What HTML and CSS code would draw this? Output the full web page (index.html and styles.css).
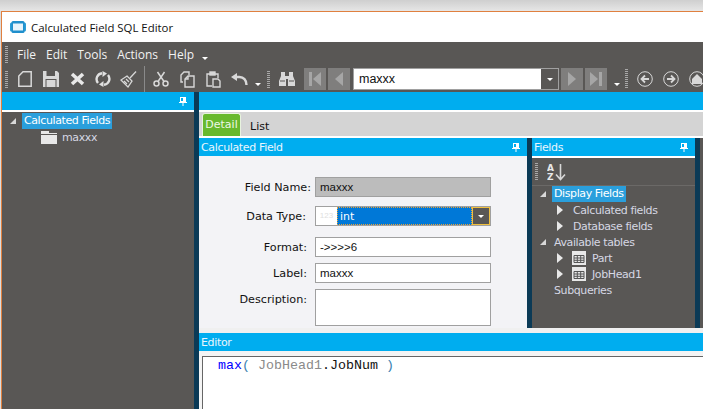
FILE: index.html
```html
<!DOCTYPE html>
<html lang="en">
<head>
<meta charset="utf-8">
<title>Calculated Field SQL Editor</title>
<link rel="stylesheet" href="styles.css">
</head>
<body>
<div class="desktop-strip"></div>
<div class="window">
  <header class="titlebar">
    <svg class="app-icon" width="16" height="12" viewBox="0 0 16 12"><rect x="0" y="1.500" width="16" height="9" rx="1.500" fill="#2a9fd8"/><rect x="1.500" y="0" width="13" height="12" rx="1.500" fill="#1f8fcc"/><rect x="3" y="2.500" width="10" height="7" fill="#e6f4fb"/></svg>
    <span>Calculated Field SQL Editor</span>
  </header>

  <nav class="menubar">
    <i class="grip"></i>
    <span class="menu-item">File</span><span class="menu-item">Edit</span><span class="menu-item">Tools</span><span class="menu-item">Actions</span><span class="menu-item">Help</span>
    <i class="chev menu-chev"></i>
  </nav>

  <div class="toolbar">
    <i class="grip"></i>
    <div class="tool"><svg width="14" height="16" viewBox="0 0 14 16" fill="none" stroke="#d8d8d8" stroke-width="1.500"><path d="M5 .8h8.200v14.400H.8V5z"/></svg></div>
    <div class="tool"><svg width="16" height="16" viewBox="0 0 16 16"><path d="M0 0h14l2 2v14H0z" fill="#d8d8d8"/><rect x="3.500" y="0" width="8.500" height="5" fill="#595755"/><rect x="2.500" y="8" width="11" height="8" fill="#595755"/><rect x="3.500" y="9" width="9" height="7" fill="#d8d8d8"/></svg></div>
    <div class="tool"><svg width="15" height="14" viewBox="0 0 15 14"><path d="M2 2l11 10M13 2L2 12" stroke="#e8e8e8" stroke-width="3.600"/></svg></div>
    <div class="tool"><svg width="16" height="16" viewBox="0 0 16 16" fill="none" stroke="#e0e0e0" stroke-width="2.400"><path d="M3 12A6 6 0 0 1 7 2.200"/><path d="M13 4a6 6 0 0 1-4 9.800"/><path d="M7.500 0v6L12 2.500z" fill="#e0e0e0" stroke="none"/><path d="M8.500 16v-6L4 13.500z" fill="#e0e0e0" stroke="none"/></svg></div>
    <div class="tool"><svg width="18" height="18" viewBox="0 0 18 18" fill="none" stroke="#d8d8d8" stroke-width="1.300"><path d="M10 8l6-6.500"/><path d="M7 6l5 5-4 6-7-7z"/><path d="M4 11l3 3M6 9l3 3"/></svg></div>
    <i class="sep"></i>
    <div class="tool"><svg width="16" height="16" viewBox="0 0 16 16" fill="none" stroke="#d8d8d8" stroke-width="1.500"><circle cx="3.500" cy="12.500" r="2.500"/><circle cx="12.500" cy="12.500" r="2.500"/><path d="M5 10.500L11.500 1M11 10.500L4.500 1"/></svg></div>
    <div class="tool"><svg width="15" height="17" viewBox="0 0 15 17" fill="none" stroke="#d8d8d8" stroke-width="1.400"><path d="M3 11H1V4l3-3h5v3"/><path d="M8 5h6v11H5V8z"/><path d="M8 5v3H5"/></svg></div>
    <div class="tool"><svg width="15" height="17" viewBox="0 0 15 17" fill="none" stroke="#d8d8d8" stroke-width="1.400"><path d="M6 15H1V3h11v4"/><rect x="4" y="1" width="5" height="3" fill="#d8d8d8"/><path d="M7 8h5l2 2v6H7z" fill="#595755"/></svg></div>
    <div class="tool"><svg width="17" height="12" viewBox="0 0 17 12" fill="none" stroke="#d8d8d8"><path d="M15.500 12c0-5-3-8-7-8H5" stroke-width="2.400"/><path d="M6 0v8L0 4z" fill="#d8d8d8" stroke="none"/></svg></div>
    <i class="chev tool-chev"></i>
    <i class="grip grip-mid"></i>
    <div class="tool tool-bino"><svg width="16" height="14" viewBox="0 0 16 14"><path d="M2 0h4v4h4V0h4v4l2 5v5H9V7H7v7H0V9l2-5z" fill="#d8d8d8"/><path d="M1 9h5M10 9h5" stroke="#595755"/></svg></div>
    <div class="nav-btn"><svg width="14" height="14" viewBox="0 0 14 14" fill="#a6a6a6"><rect x="1" y="0" width="3" height="14"/><path d="M13 0v14L5 7z"/></svg></div>
    <div class="nav-btn"><svg width="10" height="14" viewBox="0 0 10 14" fill="#a6a6a6"><path d="M9 0v14L1 7z"/></svg></div>
    <div class="combo"><span class="combo-text">maxxx</span><span class="combo-arrow"><i class="chev"></i></span></div>
    <div class="nav-btn"><svg width="10" height="14" viewBox="0 0 10 14" fill="#a6a6a6"><path d="M1 0v14l8-7z"/></svg></div>
    <div class="nav-btn"><svg width="14" height="14" viewBox="0 0 14 14" fill="#a6a6a6"><rect x="10" y="0" width="3" height="14"/><path d="M1 0v14l8-7z"/></svg></div>
    <i class="chev tool-chev chev-end"></i>
    <i class="grip grip-end"></i>
    <div class="circle-btn"><svg width="16" height="16" viewBox="0 0 16 16" fill="none" stroke="#d8d8d8"><circle cx="8" cy="8" r="7.300"/><path d="M12 8H4.500M8 4.500L4.500 8 8 11.500" stroke-width="1.800"/></svg></div>
    <div class="circle-btn"><svg width="16" height="16" viewBox="0 0 16 16" fill="none" stroke="#d8d8d8"><circle cx="8" cy="8" r="7.300"/><path d="M4 8h7.500M8 4.500L11.500 8 8 11.500" stroke-width="1.800"/></svg></div>
    <div class="circle-btn"><svg width="16" height="16" viewBox="0 0 16 16" fill="none" stroke="#d8d8d8"><circle cx="8" cy="8" r="7.300"/><path d="M8 3l5 5v5H3V8z" fill="#d8d8d8" stroke="none"/></svg></div>
  </div>

  <div class="workspace">
    <aside class="left-pane">
      <div class="blue-bar left-bar"><svg class="pin" width="8" height="9" viewBox="0 0 8 9"><path d="M1 0h6v5H1zM0 5h8v1H0zM3.500 6h1v3h-1z" fill="#fff"/><rect x="2" y="1" width="2" height="3" fill="#00adef"/></svg></div>
      <div class="dark-tree left-tree">
        <div class="tree-row"><i class="open-arrow"></i><span class="selected">Calculated Fields</span></div>
        <div class="tree-row leaf"><svg width="16" height="13" viewBox="0 0 16 13"><path d="M0 0h8v2h8v11H0z" fill="#e8e8e8"/><rect x="0" y="3" width="16" height="1" fill="#595755"/></svg><span>maxxx</span></div>
      </div>
    </aside>
    <i class="splitter"></i>
    <main class="right-pane">
      <div class="blue-bar right-bar"></div>
      <div class="tabstrip">
        <span class="tab active">Detail</span>
        <span class="tab">List</span>
      </div>
      <div class="panels">
        <section class="calc-panel">
          <div class="panel-head"><span>Calculated Field</span><svg class="pin" width="8" height="9" viewBox="0 0 8 9"><path d="M1 0h6v5H1zM0 5h8v1H0zM3.500 6h1v3h-1z" fill="#fff"/><rect x="2" y="1" width="2" height="3" fill="#00adef"/></svg></div>
          <div class="form">
            <div class="row row-name"><label class="lbl lbl-wide">Field Name:</label><div class="field readonly">maxxx</div></div>
            <div class="row row-type"><label class="lbl lbl-type">Data Type:</label>
              <div class="field type-field"><span class="type-icon">123</span><span class="type-value">int</span><span class="type-arrow"><i class="chev"></i></span></div>
            </div>
            <div class="row row-format"><label class="lbl">Format:</label><div class="field">-&gt;&gt;&gt;&gt;6</div></div>
            <div class="row row-tight"><label class="lbl">Label:</label><div class="field">maxxx</div></div>
            <div class="row row-tight"><label class="lbl">Description:</label><div class="field area"></div></div>
          </div>
        </section>
        <i class="splitter"></i>
        <section class="fields-panel">
          <div class="panel-head"><span>Fields</span><svg class="pin" width="8" height="9" viewBox="0 0 8 9"><path d="M1 0h6v5H1zM0 5h8v1H0zM3.500 6h1v3h-1z" fill="#fff"/><rect x="2" y="1" width="2" height="3" fill="#00adef"/></svg></div>
          <div class="fields-body">
            <div class="fields-tools"><i class="grip"></i>
              <svg class="sort" width="19" height="18" viewBox="0 0 19 18"><text x="0" y="8" class="sort-letter">A</text><text x="0" y="17" class="sort-letter">Z</text><path d="M13.500 1v15M9 11.500l4.500 5 4.500-5" fill="none" stroke="#d8d8d8" stroke-width="1.600"/></svg>
            </div>
            <div class="dark-tree fields-tree">
              <div class="tree-row"><i class="open-arrow"></i><span class="selected">Display Fields</span></div>
              <div class="tree-row lvl2"><i class="closed-arrow"></i><span>Calculated fields</span></div>
              <div class="tree-row lvl2"><i class="closed-arrow"></i><span>Database fields</span></div>
              <div class="tree-row"><i class="open-arrow"></i><span class="plain">Available tables</span></div>
              <div class="tree-row lvl2"><i class="closed-arrow"></i><svg class="grid-icon" width="14" height="14" viewBox="0 0 14 14"><rect width="14" height="14" fill="#e8e8e8"/><path d="M2 4.500h10v7H2zM2 7h10M2 9.300h10M5.300 4.500v7M8.700 4.500v7" fill="#e8e8e8" stroke="#555"/></svg><span>Part</span></div>
              <div class="tree-row lvl2"><i class="closed-arrow"></i><svg class="grid-icon" width="14" height="14" viewBox="0 0 14 14"><rect width="14" height="14" fill="#e8e8e8"/><path d="M2 4.500h10v7H2zM2 7h10M2 9.300h10M5.300 4.500v7M8.700 4.500v7" fill="#e8e8e8" stroke="#555"/></svg><span>JobHead1</span></div>
              <div class="tree-row"><i class="no-arrow"></i><span class="plain">Subqueries</span></div>
            </div>
          </div>
        </section>
        <i class="splitter"></i>
        <div class="overflow-panel"></div>
      </div>
      <div class="band"></div>
      <section class="editor">
        <div class="panel-head"><span>Editor</span></div>
        <div class="editor-body">
          <pre class="code"><span class="kw">max</span><span class="paren">(</span> <span class="tbl">JobHead1</span>.JobNum <span class="paren">)</span></pre>
        </div>
      </section>
    </main>
  </div>
</div>
</body>
</html>
```

FILE: styles.css
```css
* { box-sizing: border-box; }
html, body { margin: 0; height: 409px; width: 703px; overflow: hidden; }
body {
  font-family: "DejaVu Sans", sans-serif;
  font-size: 11px;
  background: #dcdcdc;
  display: flex;
  flex-direction: column;
}
i { display: block; flex: none; }
.desktop-strip { height: 11px; flex: none; background: linear-gradient(#cfcfcf, #e6e6e6); }
.window {
  flex: 1;
  min-height: 0;
  margin-left: 1px;
  border-left: 1px solid #e0803f;
  border-top: 1px solid #e0803f;
  display: flex;
  flex-direction: column;
  background: #595755;
}
.titlebar {
  height: 30px;
  flex: none;
  background: #fff;
  display: flex;
  align-items: center;
  gap: 5px;
  padding-left: 8px;
  font-family: "Open Sans", sans-serif;
  font-size: 11.4px;
  color: #111;
}
.app-icon { flex: none; }

.grip {
  width: 3px;
  height: 17px;
  background: repeating-linear-gradient(#a8a8a8 0 1px, transparent 1px 2px);
}
.menubar {
  height: 24px;
  flex: none;
  display: flex;
  align-items: center;
  padding-left: 3px;
  color: #f2f2f2;
  font-family: "Open Sans", sans-serif;
  font-size: 12px;
}
.menu-item { margin-left: 10px; }
.menubar .grip + .menu-item { margin-left: 9px; }
.chev {
  width: 0;
  height: 0;
  border-left: 3px solid transparent;
  border-right: 3px solid transparent;
  border-top: 3px solid #fff;
}
.menu-chev { margin: 8px 0 0 8px; }

.toolbar {
  height: 26px;
  flex: none;
  display: flex;
  align-items: center;
  padding-left: 3px;
}
.tool {
  width: 26px;
  height: 22px;
  flex: none;
  display: flex;
  align-items: center;
  justify-content: center;
}
.toolbar > .grip + .tool { margin-left: 4px; }
.sep { width: 1px; height: 26px; background: #8a8a8a; margin: 0 3px 0 2px; }
.tool-chev { margin: 10px 0 0 3px; }
.toolbar > .grip-mid { margin-left: 6px; }
.toolbar > .grip-mid + .tool-bino { margin-left: 4px; margin-right: 4px; }
.nav-btn {
  width: 22px;
  height: 22px;
  flex: none;
  margin-right: 2px;
  background: #7f7e7d;
  display: flex;
  align-items: center;
  justify-content: center;
}
.combo {
  width: 206px;
  height: 22px;
  flex: none;
  margin: 0 2px 0 1px;
  background: #fff;
  border: 1px solid #a0a0a0;
  display: flex;
  align-items: center;
  color: #111;
  font-family: "Liberation Sans", sans-serif;
  font-size: 12.5px;
}
.combo-text { flex: 1; padding-left: 5px; }
.combo-arrow {
  width: 17px;
  height: 100%;
  background: #595755;
  display: flex;
  align-items: center;
  justify-content: center;
}
.chev-end { margin-left: 5px; }
.grip-end { margin-left: 5px; height: 20px; }
.circle-btn {
  width: 26px;
  flex: none;
  display: flex;
  justify-content: center;
}
.grip-end + .circle-btn { margin-left: 4px; }

.workspace { flex: 1; min-height: 0; display: flex; }
.splitter { width: 5px; flex: none; background: #0b3a56; }
.left-pane { width: 192px; flex: none; display: flex; flex-direction: column; }
.blue-bar {
  height: 18px;
  flex: none;
  background: #00adef;
  border: 0;
}
.left-bar { display: flex; align-items: center; justify-content: flex-end; padding-right: 7px; }
.dark-tree { color: #d6d8e4; font-size: 11px; letter-spacing: -.4px; }
.left-tree { border-top: 2px solid #fff; padding-top: 1px; flex: 1; }
.tree-row { height: 16px; display: flex; align-items: center; }
.open-arrow {
  width: 0;
  height: 0;
  margin-left: 8px;
  border-bottom: 6px solid #d8d8d8;
  border-left: 6px solid transparent;
}
.closed-arrow {
  width: 0;
  height: 0;
  border-left: 6px solid #e8e8e8;
  border-top: 5px solid transparent;
  border-bottom: 5px solid transparent;
}
.no-arrow { width: 14px; }
.selected { background: #2a9fdc; color: #fff; padding: 0 2px; height: 16px; line-height: 16px; margin-left: 6px; }
.plain { margin-left: 8px; }
.leaf { padding-left: 39px; gap: 5px; }
.right-pane { flex: 1; min-width: 0; display: flex; flex-direction: column; background: #f0f0f0; }
.tabstrip {
  height: 28px;
  flex: none;
  background: #d4d4d4;
  border-top: 2px solid #fff;
  border-bottom: 2px solid #fff;
  display: flex;
  align-items: flex-end;
  padding-left: 3px;
  gap: 9px;
}
.tab { height: 22px; line-height: 26px; color: #111; }
.tab.active {
  width: 39px;
  height: 23px;
  line-height: 21px;
  text-align: center;
  background: #68b92e;
  color: #eef7e6;
  border: 1px solid #e8f3df;
  border-bottom: 0;
  border-radius: 3px 3px 0 0;
}
.panels { height: 190px; flex: none; display: flex; }
.panel-head {
  height: 18px;
  flex: none;
  background: #00adef;
  color: #eaf6fd;
  display: flex;
  align-items: center;
  justify-content: space-between;
  padding: 0 7px 0 2px;
  font-size: 11px;
  letter-spacing: -.35px;
}
.calc-panel { width: 328px; flex: none; display: flex; flex-direction: column; background: #f3f3f6; }
.form { padding-top: 21px; }
.row { display: flex; padding-right: 36px; }
.row-type { margin-top: 9px; }
.row-format { margin-top: 11px; }
.row-tight { margin-top: 6px; }
.lbl {
  width: 108px;
  height: 20px;
  text-align: right;
  line-height: 22px;
  color: #111;
  font-size: 11.2px;
  flex: none;
}
.lbl + .field { margin-left: 8px; }
.lbl-wide { width: 112px; }
.lbl.lbl-wide + .field { margin-left: 4px; }
.lbl-type { width: 107px; }
.lbl.lbl-type + .field { margin-left: 9px; }
.field {
  width: 176px;
  height: 20px;
  background: #fff;
  border: 1px solid #a0a0a0;
  padding-left: 4px;
  line-height: 18px;
  font-family: "Liberation Sans", sans-serif;
  font-size: 11.5px;
  color: #111;
}
.readonly { background: #bcbcbc; }
.area { height: 37px; }
.type-field { display: flex; padding: 0; }
.type-icon { width: 21px; text-align: center; color: #e0e0e0; font-size: 8px; flex: none; }
.type-value {
  flex: 1;
  background: #0078d7;
  color: #fff;
  padding-left: 3px;
  font-family: "DejaVu Sans", sans-serif;
  font-size: 11px;
  line-height: 19px;
  outline: 1px dotted #e8a33a;
  outline-offset: -1px;
}
.type-arrow {
  width: 18px;
  background: #595755;
  border: 1px solid #f0c040;
  display: flex;
  align-items: center;
  justify-content: center;
  flex: none;
}
.fields-panel { width: 163px; flex: none; display: flex; flex-direction: column; background: #595755; }
.fields-body { flex: 1; border-top: 2px solid #fff; }
.fields-tools {
  height: 28px;
  border-bottom: 1px solid #6b6967;
  display: flex;
  align-items: center;
  padding-left: 3px;
  gap: 9px;
}
.sort-letter { font: bold 9px "DejaVu Sans", sans-serif; fill: #e8e8e8; }
.lvl2 { padding-left: 25px; }
.lvl2 > span { margin-left: 10px; }
.grid-icon { margin-left: 9px; flex: none; }
.lvl2 .grid-icon + span { margin-left: 6px; }
.overflow-panel { flex: 1; background: #595755; }
.band { height: 5px; flex: none; background: #f0f0f0; }
.editor { flex: 1; min-height: 0; display: flex; flex-direction: column; }
.editor-body {
  flex: 1;
  padding: 5px 0 0 3px;
  background: #f4f4f4;
}
.code {
  margin: 0;
  height: 100%;
  background: #fff;
  border: 1px solid #666;
  border-width: 1px 0 0 1px;
  padding: 1px 0 0 15px;
  font-family: "Liberation Mono", monospace;
  font-size: 13.33px;
  line-height: 15px;
  color: #111;
}
.kw { color: #0000ff; }
.paren { color: #3a7fb0; }
.tbl { color: #8a8a8a; }
```
